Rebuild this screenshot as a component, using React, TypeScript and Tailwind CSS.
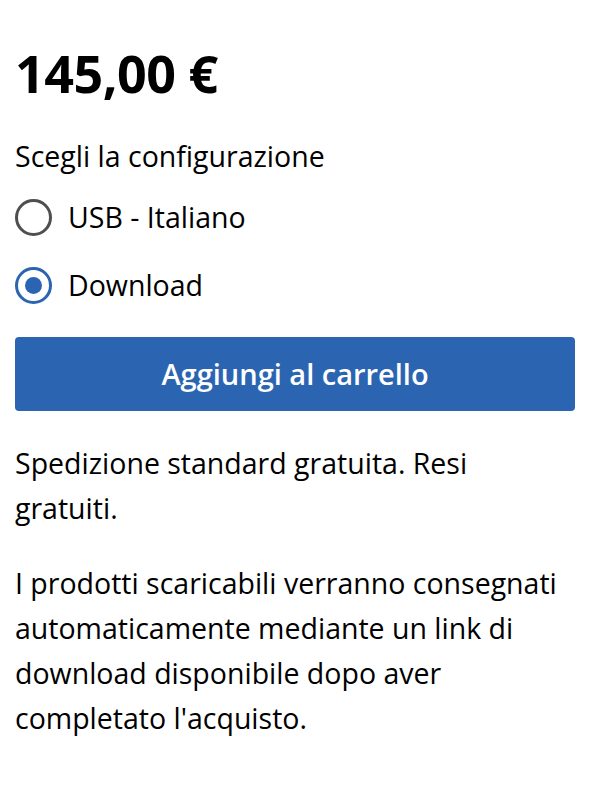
import { useState } from 'react';

const options = ['USB - Italiano', 'Download'];

export default function App() {
  const [selected, setSelected] = useState('Download');

  return (
    <div className="min-h-screen bg-white pl-[15px] pr-[24px] pt-[41px] text-black" style={{ fontFamily: '"Open Sans", "Noto Sans", sans-serif' }}>
      <h1 className="text-[52px] font-bold leading-[64px] tracking-[-0.5px]">145,00 €</h1>

      <div className="mt-[31px] text-[28.5px] leading-[40px]">Scegli la configurazione</div>

      <div className="mt-[19px] flex flex-col gap-[24px]">
        {options.map((opt) => {
          const active = selected === opt;
          return (
            <label key={opt} className="flex cursor-pointer items-center gap-[16px]" onClick={() => setSelected(opt)}>
              <span
                className={
                  active
                    ? 'flex h-[37px] w-[37px] shrink-0 items-center justify-center rounded-full border-[3px] border-[#2b65b2]'
                    : 'flex h-[37px] w-[37px] shrink-0 items-center justify-center rounded-full border-[3px] border-[#4f4f4f]'
                }
              >
                {active && <span className="h-[17px] w-[17px] rounded-full bg-[#2b65b2]" />}
              </span>
              <span className="text-[28.5px] leading-[44px]">{opt}</span>
            </label>
          );
        })}
      </div>

      <button className="mt-[30px] flex h-[74px] w-full items-center justify-center rounded-[4px] bg-[#2b65b2] text-[29px] font-semibold text-white">
        Aggiungi al carrello
      </button>

      <p className="mt-[30px] max-w-[548px] text-[28.5px] leading-[45px]">Spedizione standard gratuita. Resi gratuiti.</p>

      <p className="mt-[30px] max-w-[548px] text-[28.5px] leading-[45px]">
        I prodotti scaricabili verranno consegnati automaticamente mediante un link di download disponibile dopo aver completato l'acquisto.
      </p>
    </div>
  );
}
